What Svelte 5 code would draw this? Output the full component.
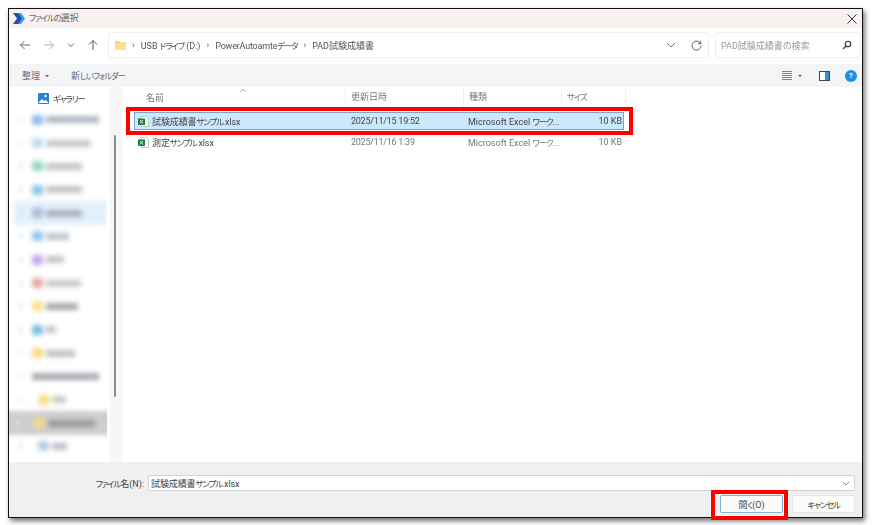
<script>
  const navItems = [
    { icon: '#8fb8ea', w: 53, label: '#b0b6c0', x: 0 },
    { icon: '#bcdcf5', w: 45, label: '#c4c8ce', x: 0 },
    { icon: '#8fd6c0', w: 36, label: '#c0c4c8', x: 0 },
    { icon: '#86c5e8', w: 36, label: '#c0c4c8', x: 0 },
    { icon: '#a8bcd8', w: 36, label: '#a8b0bc', x: 0, sel: true },
    { icon: '#92c4ee', w: 23, label: '#c0c4c8', x: 0 },
    { icon: '#c2a6ec', w: 18, label: '#c4c4ca', x: 0 },
    { icon: '#e8a8a0', w: 35, label: '#ccc8c8', x: 0 },
    { icon: '#fbdf8c', w: 32, label: '#a8a8a8', x: 0 },
    { icon: '#74c0de', w: 10, label: '#c0c4c8', x: 0 },
    { icon: '#f8d880', w: 29, label: '#c0c0c0', x: 0 },
    { icon: '', w: 67, label: '#a8aab0', x: 1 },
    { icon: '#fcdc8c', w: 14, label: '#c8c8c8', x: 6 },
    { icon: '#f6d888', w: 47, label: '#9a9a9a', x: 6, cur: true },
    { icon: '#b4cce4', w: 15, label: '#bcc0c8', x: 6 }
  ];
  const files = [
    { pre: '試験成績書', kana: 'サンプル', date: '2025/11/15 19:52', selected: true },
    { pre: '測定', kana: 'サンプル', date: '2025/11/16 1:39', selected: false }
  ];
</script>

<div class="page">
  <div class="dialog">
    <header class="title">
      <svg class="logo" width="13" height="11" viewBox="0 0 13 11">
        <path d="M0 0h6l4 5.500-4 5.500H0l4-5.500z" fill="#1f4fb8" />
        <path d="M5 0h3l4 5.500-4 5.500H5l4-5.500z" fill="#35a0ec" />
      </svg>
      <span class="title-text"><span class="k">ファイルの</span>選択</span>
      <svg class="close" width="10" height="10" viewBox="0 0 10 10">
        <path d="M.5.500l9 9M9.500.500l-9 9" stroke="#333" stroke-width="1" fill="none" />
      </svg>
    </header>

    <div class="nav">
      <div class="arrows">
        <svg width="12" height="12" viewBox="0 0 12 12"><path d="M11 6H1.500M5.500 2l-4 4 4 4" stroke="#666" fill="none" /></svg>
        <svg width="12" height="12" viewBox="0 0 12 12"><path d="M1 6h9.500M6.500 2l4 4-4 4" stroke="#b0b0b0" fill="none" /></svg>
        <svg width="8" height="12" viewBox="0 0 8 12"><path d="M1 4.500l3 3 3-3" stroke="#666" fill="none" /></svg>
        <svg width="12" height="12" viewBox="0 0 12 12"><path d="M6 11V1.500M2 5.500l4-4 4 4" stroke="#555" fill="none" /></svg>
      </div>
      <div class="address">
        <svg class="folder" width="11" height="9" viewBox="0 0 11 9">
          <path d="M0 1a1 1 0 0 1 1-1h3l1 1.500h6V9H0z" fill="#fbd35f" />
          <path d="M0 2.500h11V9H0z" fill="#fde08a" />
        </svg>
        <span class="crumb-sep">›</span><span>USB <span class="k">ドライブ</span> (D:)</span>
        <span class="crumb-sep">›</span><span class="tight">PowerAutoamte<span class="k">データ</span></span>
        <span class="crumb-sep">›</span><span>PAD試験成績書</span>
        <span class="spacer"></span>
        <svg width="10" height="6" viewBox="0 0 10 6"><path d="M1 1l4 4 4-4" stroke="#777" fill="none" /></svg>
        <svg class="refresh" width="11" height="11" viewBox="0 0 11 11"><path d="M9.500 3.500A4.500 4.500 0 1 0 10 5.500M9.800.800v3h-3" stroke="#666" fill="none" /></svg>
      </div>
      <div class="search">
        <span>PAD試験成績書の検索</span>
        <svg width="10" height="10" viewBox="0 0 10 10"><circle cx="6" cy="4" r="2.700" stroke="#444" stroke-width="1.300" fill="none" /><path d="M4 6L1 9" stroke="#444" stroke-width="1.500" /></svg>
      </div>
    </div>

    <div class="toolbar">
      <span class="organize">整理</span><span class="caret"></span>
      <span class="newfolder">新<span class="k">しいフォルダー</span></span>
      <span class="spacer"></span>
      <svg width="10" height="9" viewBox="0 0 10 9"><path d="M0 .500h10M0 2.500h10M0 4.500h10M0 6.500h10M0 8.500h10" stroke="#666" stroke-width=".8" /></svg>
      <span class="caret view-caret"></span>
      <svg class="pane" width="11" height="10" viewBox="0 0 11 10"><rect x=".5" y=".5" width="10" height="9" fill="#fff" stroke="#444" /><rect x="6" y="1" width="4" height="8" fill="#2f8fd8" /></svg>
      <span class="help">?</span>
    </div>

    <div class="body">
      <aside class="side">
        <div class="gallery">
          <svg width="11" height="11" viewBox="0 0 11 11"><rect width="11" height="11" rx="1" fill="#2a7fd8" /><path d="M1 9l3-3 2 2 1.500-1L10 9v1H1z" fill="#fff" /><circle cx="7.500" cy="3" r="1.200" fill="#fff" /></svg>
          <span class="k">ギャラリー</span>
        </div>
        <div class="tree">
          {#each navItems as n}
            <div class="tree-row" class:sel={n.sel} class:cur={n.cur}>
              <i class="dot"></i>
              {#if n.icon}
                <i class="ico" style:background={n.icon} style:margin-left="{n.x}px"></i>
              {/if}
              <i class="lbl" style:background={n.label} style:width="{n.w}px"></i>
            </div>
          {/each}
        </div>
      </aside>
      <div class="track"><div class="thumb"></div></div>

      <main class="list">
        <div class="heads">
          <svg class="sort" width="6" height="3" viewBox="0 0 6 3"><path d="M.3 2.700L3 .400l2.700 2.300" stroke="#aaa" fill="none" /></svg>
          <span class="c1">名前</span><span class="c2">更新日時</span><span class="c3">種類</span><span class="c4"><span class="k">サイズ</span></span>
        </div>
        <div class="rows">
          {#each files as f}
            <div class="row" class:selected={f.selected}>
              <span class="c1 name">
                <svg width="11" height="11" viewBox="0 0 11 11">
                  <path d="M3 .500h5.500l2 2v8H3z" fill="#fff" stroke="#9bbfa8" stroke-width=".7" />
                  <rect x="0" y="2.500" width="7" height="6.500" fill="#1d7a45" />
                  <path d="M2 4l3 3.500M5 4L2 7.500" stroke="#fff" stroke-width=".9" />
                </svg>
                <span class="fname">{f.pre}<span class="k">{f.kana}</span>.xlsx</span>
              </span>
              <span class="c2 date">{f.date}</span>
              <span class="c3">Microsoft Excel <span class="k">ワーク</span>...</span>
              <span class="c4 size">10 KB</span>
            </div>
          {/each}
        </div>
      </main>
    </div>

    <footer class="foot">
      <div class="file-row">
        <span class="fn-label"><span class="k">ファイル</span>名(N):</span>
        <div class="combo">
          <span class="fname">試験成績書<span class="k">サンプル</span>.xlsx</span>
          <svg width="8" height="5" viewBox="0 0 8 5"><path d="M1 1l3 3 3-3" stroke="#888" fill="none" /></svg>
        </div>
      </div>
      <div class="buttons">
        <button class="primary">開<span class="k">く</span>(O)</button>
        <button class="k">キャンセル</button>
      </div>
    </footer>
  </div>

  <div class="mark mark-row"></div>
  <div class="mark mark-open"></div>
</div>

<style>
  :global(body) {
    margin: 0;
    background: #fff;
  }
  .page {
    position: relative;
    width: 872px;
    height: 525px;
    overflow: hidden;
    padding: 8px 0 0 8px;
    box-sizing: border-box;
    font-family: Roboto, "Noto Sans CJK JP", sans-serif;
    font-feature-settings: "palt";
    font-size: 9px;
    color: #555;
  }
  .k {
    font-size: 8.500px;
    letter-spacing: -1.200px;
  }
  .tight { letter-spacing: -.2px; }
  .fname { letter-spacing: -.1px; }
  .dialog {
    width: 855px;
    height: 510px;
    box-sizing: border-box;
    border: 1px solid #111;
    background: #fff;
    display: flex;
    flex-direction: column;
    box-shadow: 2px 3px 5px rgba(0, 0, 0, .55);
    filter: blur(.35px);
  }
  .title {
    height: 19px;
    flex: none;
    background: #f9f0f0;
    display: flex;
    align-items: center;
    padding: 0 5px 0 4px;
    color: #666;
  }
  .title-text { margin: -2px 0 0 3px; }
  .close { margin-left: auto; }
  .nav {
    height: 36px;
    flex: none;
    display: flex;
    align-items: flex-start;
    padding-top: 4px;
    box-sizing: border-box;
  }
  .arrows {
    width: 99px;
    height: 26px;
    flex: none;
    display: flex;
    align-items: center;
    gap: 12px;
    padding-left: 10px;
    box-sizing: border-box;
  }
  .address {
    width: 601px;
    height: 26px;
    box-sizing: border-box;
    flex: none;
    border: 1px solid #f0f0f0;
    border-radius: 2px;
    display: flex;
    align-items: center;
    padding: 0 6px 0 6px;
    color: #555;
  }
  .crumb-sep { margin: 0 6px; }
  .spacer { flex: 1; }
  .refresh { margin-left: 15px; }
  .search {
    width: 146px;
    height: 26px;
    box-sizing: border-box;
    margin-left: 6px;
    border: 1px solid #f0f0f0;
    border-radius: 2px;
    display: flex;
    align-items: center;
    justify-content: space-between;
    padding: 0 8px 0 5px;
    color: #999;
  }
  .toolbar {
    height: 23px;
    flex: none;
    background: #f4f5f6;
    display: flex;
    align-items: center;
    padding: 0 5px 0 13px;
    color: #667;
  }
  .organize, .newfolder { margin-top: -1px; }
  .caret {
    width: 0;
    height: 0;
    border: 2px solid transparent;
    border-top: 2.500px solid #555;
    border-bottom: 0;
    margin-left: 5px;
  }
  .newfolder { margin-left: 22px; }
  .view-caret { margin-left: 6px; }
  .pane { margin-left: 17px; }
  .help {
    width: 12px;
    height: 12px;
    border-radius: 50%;
    background: #1b8fe0;
    color: #fff;
    font-size: 8px;
    font-weight: 700;
    display: flex;
    align-items: center;
    justify-content: center;
    margin-left: 15px;
  }
  .body {
    flex: 1;
    display: flex;
    min-height: 0;
  }
  .side {
    width: 98px;
    flex: none;
    overflow: hidden;
  }
  .gallery {
    height: 21px;
    display: flex;
    align-items: center;
    gap: 4px;
    padding-left: 29px;
    color: #444;
  }
  .gallery svg { margin-top: 2px; }
  .tree {
    display: flex;
    flex-direction: column;
    filter: blur(2.500px);
  }
  .tree-row {
    height: 23.350px;
    display: flex;
    align-items: center;
    padding-left: 10px;
    gap: 3px;
    flex: none;
  }
  .tree-row.sel { background: #e2f0fc; margin-left: 5px; padding-left: 5px; }
  .tree-row.cur { background: #cdcdcd; margin: 0 -4px; padding-left: 10px; }
  .dot { width: 4px; height: 4px; background: #e6e6e6; margin-right: 6px; flex: none; }
  .ico { width: 11px; height: 10px; border-radius: 3px; flex: none; }
  .lbl { height: 7px; flex: none; }
  .track {
    width: 15px;
    flex: none;
    background: linear-gradient(to right, #fff 0, #fff 3px, #f6f6f6 3px);
    position: relative;
  }
  .thumb {
    position: absolute;
    left: 7px;
    top: 48px;
    width: 2px;
    height: 262px;
    background: #8c8c8c;
    border-radius: 1px;
  }
  .list {
    flex: 1;
    display: flex;
    flex-direction: column;
    position: relative;
    padding-left: 7px;
  }
  .sort {
    position: absolute;
    left: 118px;
    top: 2px;
  }
  .heads {
    height: 19px;
    display: flex;
    align-items: center;
    color: #777;
    margin-bottom: 6px;
  }
  .heads .c1 { width: 216px; padding-left: 17px; }
  .heads .c2 { width: 118px; padding-left: 5px; }
  .heads .c3 { width: 98px; padding-left: 5px; }
  .heads .c4 { width: 65px; padding-left: 5px; }
  .c1, .c2, .c3, .c4 { box-sizing: border-box; flex: none; white-space: nowrap; overflow: hidden; }
  .heads > span { margin-top: 1px; }
  .heads > span + span { border-left: 1px solid #f0f0f0; height: 19px; line-height: 19px; }
  .heads .c4 { border-right: 1px solid #f0f0f0; }
  .rows { display: flex; flex-direction: column; gap: 3px; }
  .row {
    height: 18px;
    width: 490px;
    margin-left: 5px;
    box-sizing: border-box;
    display: flex;
    align-items: center;
    color: #777;
    border: 1px solid transparent;
  }
  .row.selected {
    background: #cce8ff;
    border-color: #7da2ce;
    color: #444;
  }
  .row .c1 {
    width: 216px;
    padding-left: 3px;
    display: flex;
    align-items: center;
    gap: 3px;
    color: #444;
  }
  .row .c2 { width: 117px; }
  .row .c3 { width: 98px; }
  .row .c4 { width: 57px; }
  .date { letter-spacing: -.25px; }
  .size { text-align: right; padding-right: 1px; }
  .foot {
    height: 55px;
    flex: none;
    background: #f0f0f0;
    padding: 13px 7px 0 0;
    box-sizing: border-box;
    display: flex;
    flex-direction: column;
    align-items: flex-end;
    gap: 4px;
  }
  .file-row {
    display: flex;
    align-items: center;
    gap: 4px;
    color: #444;
  }
  .combo {
    width: 707px;
    height: 16px;
    box-sizing: border-box;
    background: #fff;
    border: 1px solid #d4d4d4;
    border-radius: 2px;
    display: flex;
    align-items: center;
    justify-content: space-between;
    padding: 0 4px 0 2px;
  }
  .buttons { display: flex; gap: 9px; }
  button {
    width: 63px;
    height: 18px;
    box-sizing: border-box;
    padding: 0;
    border: 1px solid #e4e4e4;
    background: #fbfbfb;
    border-radius: 2px;
    font: inherit;
    font-feature-settings: "palt";
    color: #444;
  }
  button.k { font-size: 8.500px; letter-spacing: -1.200px; }
  button.primary { border-color: #7cb4d8; }
  .mark {
    position: absolute;
    box-sizing: border-box;
    border: 4px solid #f00;
    pointer-events: none;
  }
  .mark-row { left: 126px; top: 107px; width: 507px; height: 28px; }
  .mark-open { left: 711px; top: 490px; width: 77px; height: 30px; }
</style>
